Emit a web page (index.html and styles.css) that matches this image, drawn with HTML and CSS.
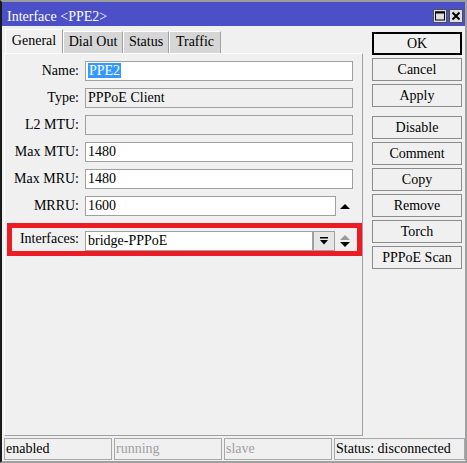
FILE: index.html
```html
<!DOCTYPE html>
<html lang="en">
<head>
    <meta charset="UTF-8">
    <title>Interface &lt;PPE2&gt;</title>
    <link rel="stylesheet" href="styles.css">
</head>
<body>
    <div class="window">
        <div class="titlebar">
            <span class="title">Interface &lt;PPE2&gt;</span>
            <div class="title-buttons">
                <span class="tbtn">
                    <svg width="12" height="12" viewBox="0 0 12 12"><rect x="1.5" y="2" width="9" height="8" fill="none" stroke="#000" stroke-width="1"/><rect x="1" y="1.5" width="10" height="2" fill="#000"/></svg>
                </span>
                <span class="tbtn">
                    <svg width="12" height="12" viewBox="0 0 12 12"><path d="M2.5 2.5 L9.5 9.5 M9.5 2.5 L2.5 9.5" stroke="#000" stroke-width="2"/></svg>
                </span>
            </div>
        </div>

        <div class="main">
            <div class="left">
                <div class="tabs">
                    <div class="tab active w-general">General</div>
                    <div class="tab w-dial">Dial Out</div>
                    <div class="tab w-status">Status</div>
                    <div class="tab w-traffic">Traffic</div>
                </div>
                <div class="panel">
                    <div class="row">
                        <label>Name:</label>
                        <div class="field"><span class="sel">PPE2</span></div>
                    </div>
                    <div class="row">
                        <label>Type:</label>
                        <div class="field ro">PPPoE Client</div>
                    </div>
                    <div class="row">
                        <label>L2 MTU:</label>
                        <div class="field ro"></div>
                    </div>
                    <div class="row">
                        <label>Max MTU:</label>
                        <div class="field">1480</div>
                    </div>
                    <div class="row">
                        <label>Max MRU:</label>
                        <div class="field">1480</div>
                    </div>
                    <div class="row">
                        <label>MRRU:</label>
                        <div class="field short">1600</div>
                        <svg class="arrow" width="10" height="6" viewBox="0 0 10 6"><path d="M0 6 L5 1 L10 6 Z" fill="#000"/></svg>
                    </div>
                    <div class="highlight">
                        <label class="narrow">Interfaces:</label>
                        <div class="field iface">bridge-PPPoE</div>
                        <span class="drop">
                            <svg width="10" height="10" viewBox="0 0 10 10"><rect x="1" y="1" width="8" height="1.5" fill="#000"/><path d="M1 4 L9 4 L5 8.5 Z" fill="#000"/></svg>
                        </span>
                        <svg class="updown" width="10" height="14" viewBox="0 0 10 14"><path d="M0 6 L5 1 L10 6 Z" fill="#9a9a9a"/><path d="M0 8 L10 8 L5 13 Z" fill="#000"/></svg>
                    </div>
                </div>
            </div>

            <div class="buttons">
                <div class="btn default">OK</div>
                <div class="btn">Cancel</div>
                <div class="btn gap">Apply</div>
                <div class="btn">Disable</div>
                <div class="btn">Comment</div>
                <div class="btn">Copy</div>
                <div class="btn">Remove</div>
                <div class="btn">Torch</div>
                <div class="btn">PPPoE Scan</div>
            </div>
        </div>

        <div class="statusbar">
            <div class="seg">enabled</div>
            <div class="seg dim">running</div>
            <div class="seg dim">slave</div>
            <div class="seg wide">Status: disconnected</div>
        </div>
    </div>
</body>
</html>
```

FILE: styles.css
```css
* {
    box-sizing: border-box;
}

body {
    margin: 0;
    font-family: "Liberation Serif", serif;
    font-size: 14px;
    color: #000;
    background: #f0f0f0;
}

.window {
    width: 467px;
    height: 463px;
    background: #f0f0f0;
    border-top: 2px solid #9c9c9c;
    border-left: 2px solid #1a1a1a;
    border-right: 2px solid #a0a0a0;
    border-bottom: 2px solid #a0a0a0;
    display: flex;
    flex-direction: column;
}

.titlebar {
    flex: none;
    height: 24px;
    background: #4b50c8;
    color: #fff;
    display: flex;
    align-items: flex-end;
    justify-content: space-between;
    padding: 0 2px 0 5px;
}

.title {
    line-height: 18px;
}

.title-buttons {
    display: flex;
    gap: 2px;
    margin-bottom: 3px;
}

.tbtn {
    width: 14px;
    height: 14px;
    background: #dedede;
    border: 1px solid #505050;
    display: flex;
    align-items: center;
    justify-content: center;
}

.main {
    flex: none;
    height: 410px;
    display: flex;
}

.left {
    width: 361px;
    padding: 3px 0 0 2px;
    display: flex;
    flex-direction: column;
}

.tabs {
    display: flex;
    align-items: flex-end;
    height: 24px;
    margin-left: 1px;
}

.tab {
    height: 22px;
    line-height: 20px;
    text-align: center;
    background: #d6d6d6;
    border-top: 1px solid #fff;
    border-left: 1px solid #fff;
    border-right: 1px solid #a0a0a0;
}

.tab.active {
    height: 24px;
    line-height: 22px;
    background: #f0f0f0;
}

.w-general { width: 58px; }
.w-dial { width: 60px; }
.w-status { width: 46px; }
.w-traffic { width: 52px; }

.panel {
    flex: 1;
    border-top: 1px solid #fff;
    border-left: 1px solid #fff;
    border-right: 1px solid #a0a0a0;
    border-bottom: 1px solid #a0a0a0;
    padding-top: 7px;
}

.row {
    display: flex;
    align-items: center;
    height: 20px;
    margin-bottom: 7px;
}

label {
    width: 74px;
    margin-right: 6px;
    text-align: right;
}

label.narrow {
    width: 67px;
}

.field {
    width: 268px;
    height: 20px;
    line-height: 18px;
    padding: 0 2px;
    background: #fff;
    border: 1px solid #a0a0a0;
    white-space: nowrap;
}

.field.ro {
    background: #f0f0f0;
}

.field.short {
    width: 251px;
}

.field.iface {
    width: 228px;
}

.sel {
    background: #3399ff;
    color: #fff;
    padding: 0 1px;
}

.arrow {
    margin-left: 4px;
}

.highlight {
    display: flex;
    align-items: flex-start;
    width: 355px;
    height: 33px;
    margin: 2px 0 0 2px;
    padding-top: 3px;
    border: 5px solid #ed1c24;
}

.drop {
    width: 22px;
    height: 20px;
    background: #e6e6e6;
    border: 1px solid #a0a0a0;
    display: flex;
    align-items: center;
    justify-content: center;
}

.updown {
    margin: 3px 0 0 5px;
}

.buttons {
    width: 102px;
    padding: 6px 0 0 9px;
}

.btn {
    width: 90px;
    height: 23px;
    margin-bottom: 3px;
    line-height: 21px;
    text-align: center;
    background: #f0f0f0;
    border: 1px solid #8c8c8c;
}

.btn.default {
    border: 2px solid #000;
    line-height: 19px;
}

.btn.gap {
    margin-bottom: 9px;
}

.statusbar {
    flex: none;
    height: 25px;
    display: flex;
    gap: 2px;
    padding: 2px 0 0 2px;
}

.seg {
    width: 108px;
    height: 22px;
    line-height: 20px;
    padding-left: 1px;
    border: 1px solid #a8a8a8;
}

.seg.dim {
    color: #a0a0a0;
}

.seg.wide {
    width: 131px;
}
```
